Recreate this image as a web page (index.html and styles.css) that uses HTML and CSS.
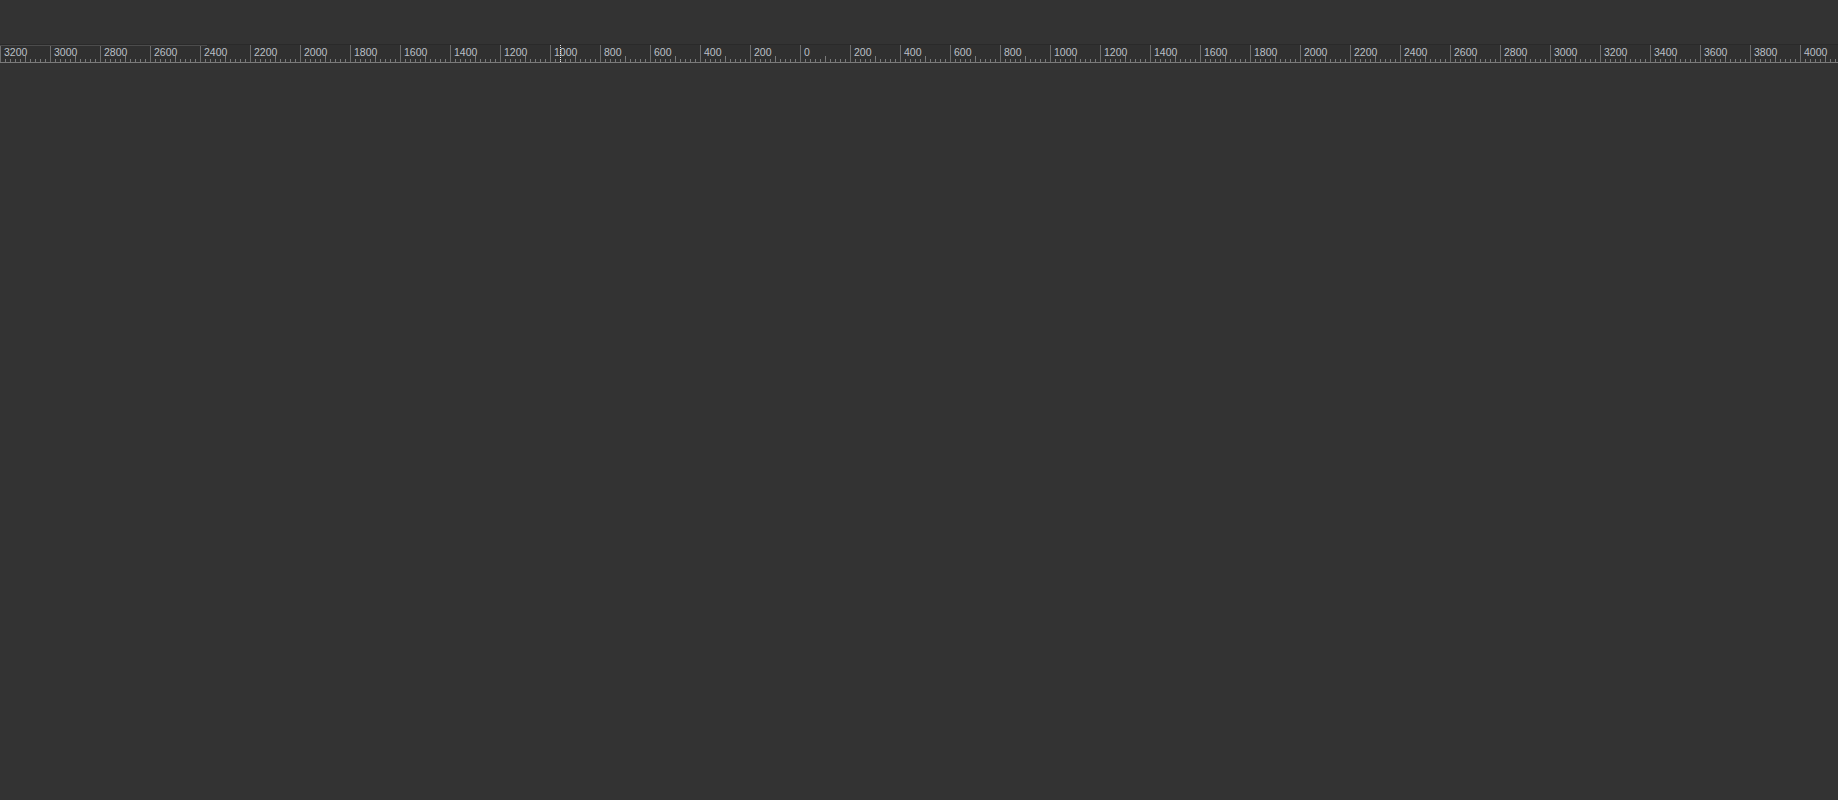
FILE: index.html
```html
<!DOCTYPE html>
<html lang="en">
<head>
    <meta charset="UTF-8">
    <title>Ruler</title>
    <link rel="stylesheet" href="styles.css">
</head>
<body>

    <div class="toolbar"></div>

    <div class="ruler">
        <span class="ruler-scroll"></span>
        <span class="ruler-cursor"></span>
        <div class="mark"><span>3200</span></div>
        <div class="mark"><span>3000</span></div>
        <div class="mark"><span>2800</span></div>
        <div class="mark"><span>2600</span></div>
        <div class="mark"><span>2400</span></div>
        <div class="mark"><span>2200</span></div>
        <div class="mark"><span>2000</span></div>
        <div class="mark"><span>1800</span></div>
        <div class="mark"><span>1600</span></div>
        <div class="mark"><span>1400</span></div>
        <div class="mark"><span>1200</span></div>
        <div class="mark"><span>1000</span></div>
        <div class="mark"><span>800</span></div>
        <div class="mark"><span>600</span></div>
        <div class="mark"><span>400</span></div>
        <div class="mark"><span>200</span></div>
        <div class="mark"><span>0</span></div>
        <div class="mark"><span>200</span></div>
        <div class="mark"><span>400</span></div>
        <div class="mark"><span>600</span></div>
        <div class="mark"><span>800</span></div>
        <div class="mark"><span>1000</span></div>
        <div class="mark"><span>1200</span></div>
        <div class="mark"><span>1400</span></div>
        <div class="mark"><span>1600</span></div>
        <div class="mark"><span>1800</span></div>
        <div class="mark"><span>2000</span></div>
        <div class="mark"><span>2200</span></div>
        <div class="mark"><span>2400</span></div>
        <div class="mark"><span>2600</span></div>
        <div class="mark"><span>2800</span></div>
        <div class="mark"><span>3000</span></div>
        <div class="mark"><span>3200</span></div>
        <div class="mark"><span>3400</span></div>
        <div class="mark"><span>3600</span></div>
        <div class="mark"><span>3800</span></div>
        <div class="mark"><span>4000</span></div>
    </div>

    <div class="canvas"></div>

</body>
</html>
```

FILE: styles.css
```css
html, body {
    margin: 0;
    padding: 0;
    height: 100%;
    overflow: hidden;
}

body {
    background-color: #333333;
    font-family: "Liberation Sans", Arial, sans-serif;
    display: flex;
    flex-direction: column;
}

.toolbar {
    height: 44px;
    flex-shrink: 0;
}

.ruler {
    position: relative;
    display: flex;
    height: 17px;
    flex-shrink: 0;
    border-top: 1px solid #2a2a2a;
    border-bottom: 1px solid #7a7a7a;
    background-color: #303030;
    overflow: hidden;
}

/* lighter strip on the top edge, left side */
.ruler-scroll {
    position: absolute;
    left: 0;
    top: 0;
    width: 207px;
    height: 1px;
    background-color: #4c4c4c;
}

/* dotted mouse position marker */
.ruler-cursor {
    position: absolute;
    left: 560px;
    top: 0;
    width: 1px;
    height: 17px;
    background-image: repeating-linear-gradient(to bottom, #e8e8e8 0 1px, transparent 1px 2px);
}

.mark {
    flex: 0 0 50px;
    height: 17px;
    box-sizing: border-box;
    border-left: 1px solid #6e6e6e;
    background-image:
        linear-gradient(#7a7a7a, #7a7a7a),
        repeating-linear-gradient(to right, transparent 0 4px, #7a7a7a 4px 5px);
    background-size: 1px 6px, 100% 3px;
    background-position: 24px 100%, 0 100%;
    background-repeat: no-repeat;
}

.mark span {
    display: block;
    padding: 2px 0 0 3px;
    font-size: 10.5px;
    line-height: 11px;
    color: #bcc0c8;
}

.canvas {
    flex: 1;
}
```
